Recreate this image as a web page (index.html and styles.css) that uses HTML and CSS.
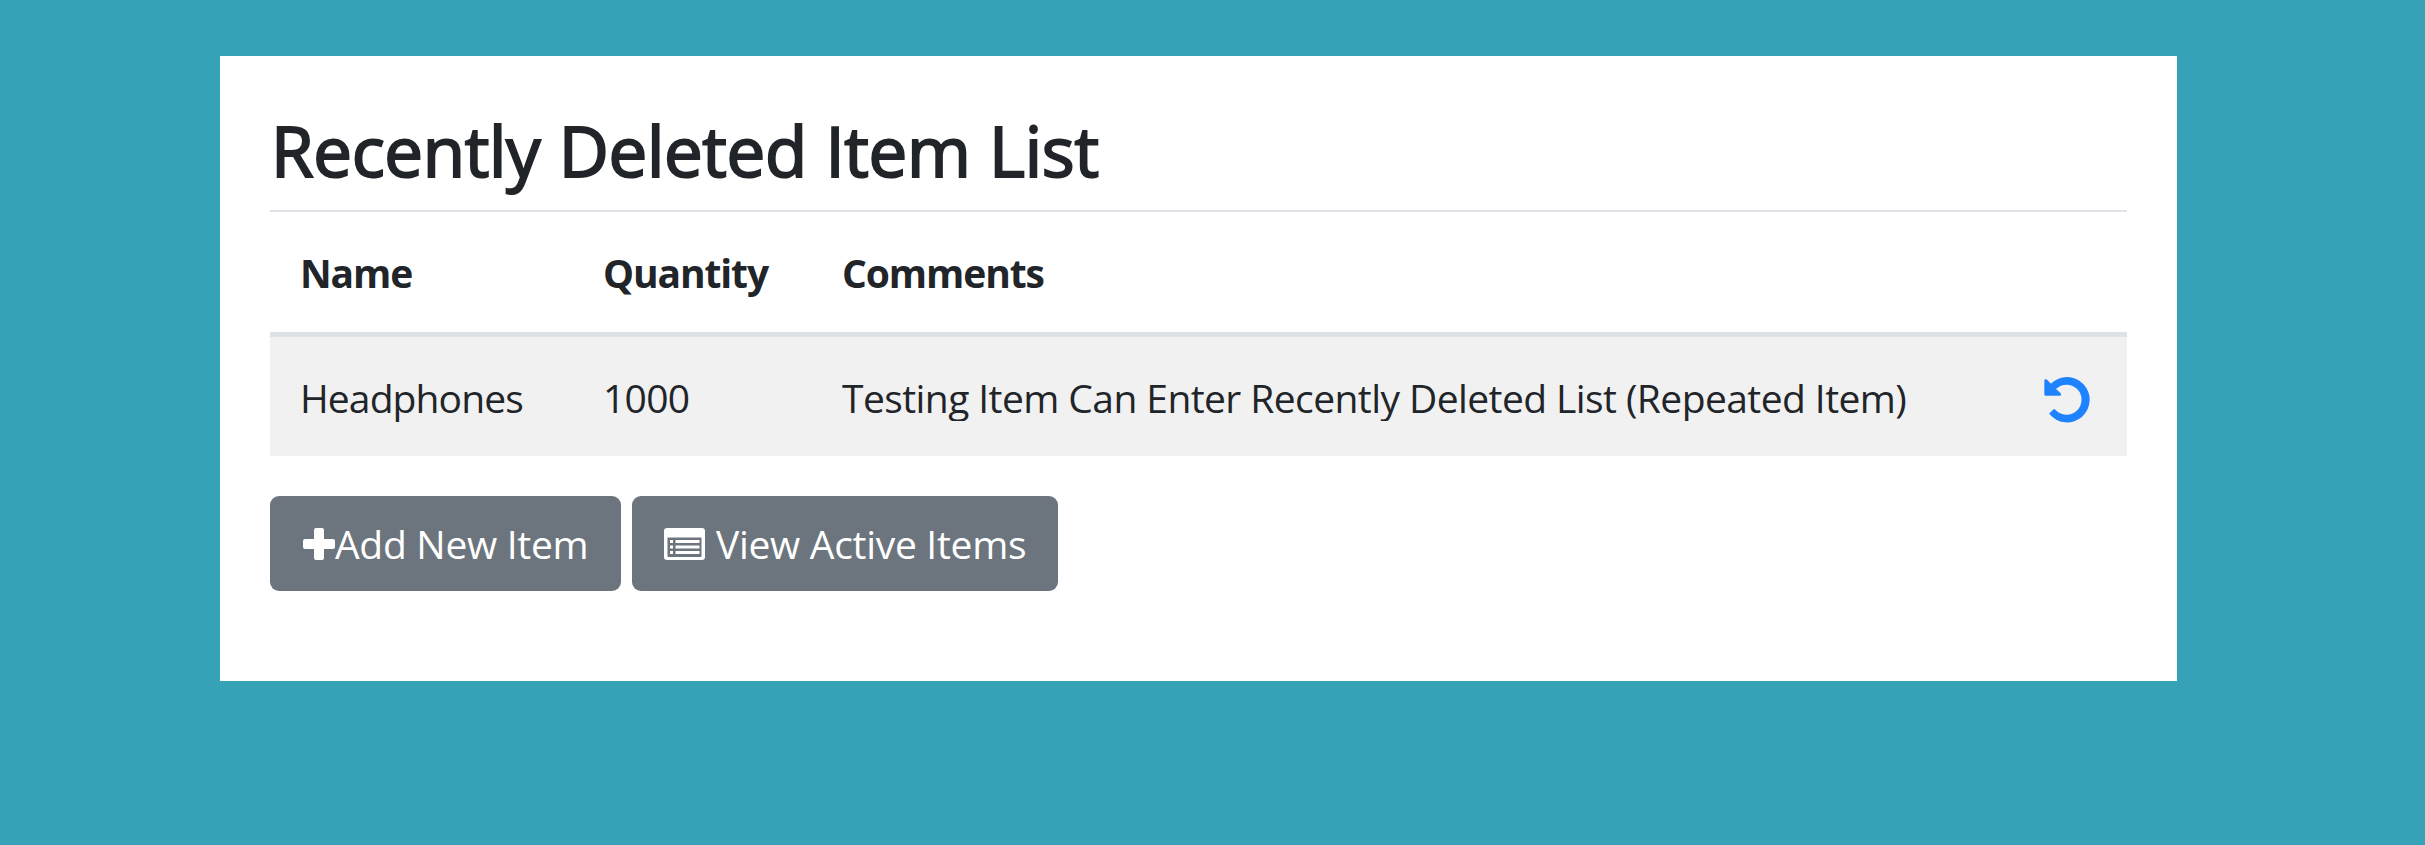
FILE: index.html
```html
<!DOCTYPE html>
<html lang="en">
<head>
<meta charset="utf-8">
<title>Recently Deleted Item List</title>
<link rel="stylesheet" href="styles.css">
</head>
<body>
<main class="card">
  <h1 class="title"><span>Recently Deleted Item List</span></h1>
  <table class="items">
    <colgroup><col class="col-name"><col class="col-qty"><col class="col-comments"><col></colgroup>
    <thead>
      <tr><th>Name</th><th>Quantity</th><th>Comments</th><th></th></tr>
    </thead>
    <tbody>
      <tr>
        <td class="name">Headphones</td>
        <td>1000</td>
        <td><div class="comment">Testing Item Can Enter Recently Deleted List (Repeated Item)</div></td>
        <td><a class="restore" href="#" aria-label="Restore"><svg class="undo" viewBox="0 0 138 138"><path d="M5 7Q7 6 9 8L21 20A68 68 0 1 1 17 112Q15 110 17 108L29 97Q31 95 34 98A45 45 0 1 0 36 36L50 49Q52 51 51 54Q50 56 47 56H4Q1 56 1 52V11Q1 7 5 7Z"/></svg></a></td>
      </tr>
    </tbody>
  </table>
  <div class="actions">
    <a class="btn btn-add" href="#"><svg class="plus" viewBox="0 0 32 32"><path d="M13 0H19Q21 0 21 2V11H30Q32 11 32 13V19Q32 21 30 21H21V30Q21 32 19 32H13Q11 32 11 30V21H2Q0 21 0 19V13Q0 11 2 11H11V2Q11 0 13 0Z"/></svg><span>Add New Item</span></a>
    <a class="btn btn-view" href="#"><svg class="list" viewBox="0 0 41 32"><path fill-rule="evenodd" d="M3 0H38Q41 0 41 3V29Q41 32 38 32H3Q0 32 0 29V3Q0 0 3 0ZM3.5 9.5V28Q3.5 29 4.5 29H36.5Q37.5 29 37.5 28V9.5Z"/><path d="M6 12h3v3h-3zM6 17.5h3v3h-3zM6 23h3v3h-3zM11.5 12h24v3h-24zM11.5 17.5h24v3h-24zM11.5 23h24v3h-24z"/></svg><span>View Active Items</span></a>
  </div>
</main>
</body>
</html>
```
FILE: styles.css
```css
* { box-sizing: border-box; }
body {
  margin: 0;
  padding: 56px 0 0 220px;
  background: #36a2b8;
  color: #212529;
  font: 400 39px/60px "Open Sans", "Noto Sans", sans-serif;
}
.card { width: 1957px; height: 625px; padding: 50px; background: #fff; }
.title {
  margin: 0;
  height: 104px;
  padding-left: 1px;
  font-size: 69px;
  font-weight: 400;
  line-height: 89px;
  letter-spacing: -0.35px;
  word-spacing: 1px;
  white-space: nowrap;
  -webkit-text-stroke: 2px #212529;
}
.items { width: 100%; table-layout: fixed; border-collapse: separate; border-spacing: 0; white-space: nowrap; }
.col-name { width: 303px; }
.col-qty { width: 239px; }
.col-comments { width: 1202px; }
th, td { padding: 0 30px; text-align: left; vertical-align: middle; }
th { height: 127px; padding-top: 2px; border-top: 2px solid #dee2e6; border-bottom: 5px solid #dee2e6; font-weight: 700; letter-spacing: -1.1px; }
td { height: 119px; padding-top: 3px; background: #f1f1f1; letter-spacing: -0.7px; }
.name { letter-spacing: -0.9px; }
.comment { height: 53px; margin-top: -7px; overflow: hidden; letter-spacing: -0.58px; }
.restore { display: block; padding-top: 3px; }
.undo { display: block; width: 46px; height: 46px; fill: #1f82ff; }
.actions { display: flex; gap: 11px; margin-top: 40px; }
.btn { display: flex; align-items: center; height: 95px; padding: 1px 0 0 32px; border-radius: 9px; background: #6c757d; color: #fff; text-decoration: none; white-space: nowrap; letter-spacing: -0.3px; }
.btn svg { flex: none; height: 32px; fill: #fff; }
.btn-add { width: 351px; padding-left: 33px; }
.btn-view { width: 426px; }
.plus { width: 32px; }
.list { width: 41px; margin-right: 11px; }
```
